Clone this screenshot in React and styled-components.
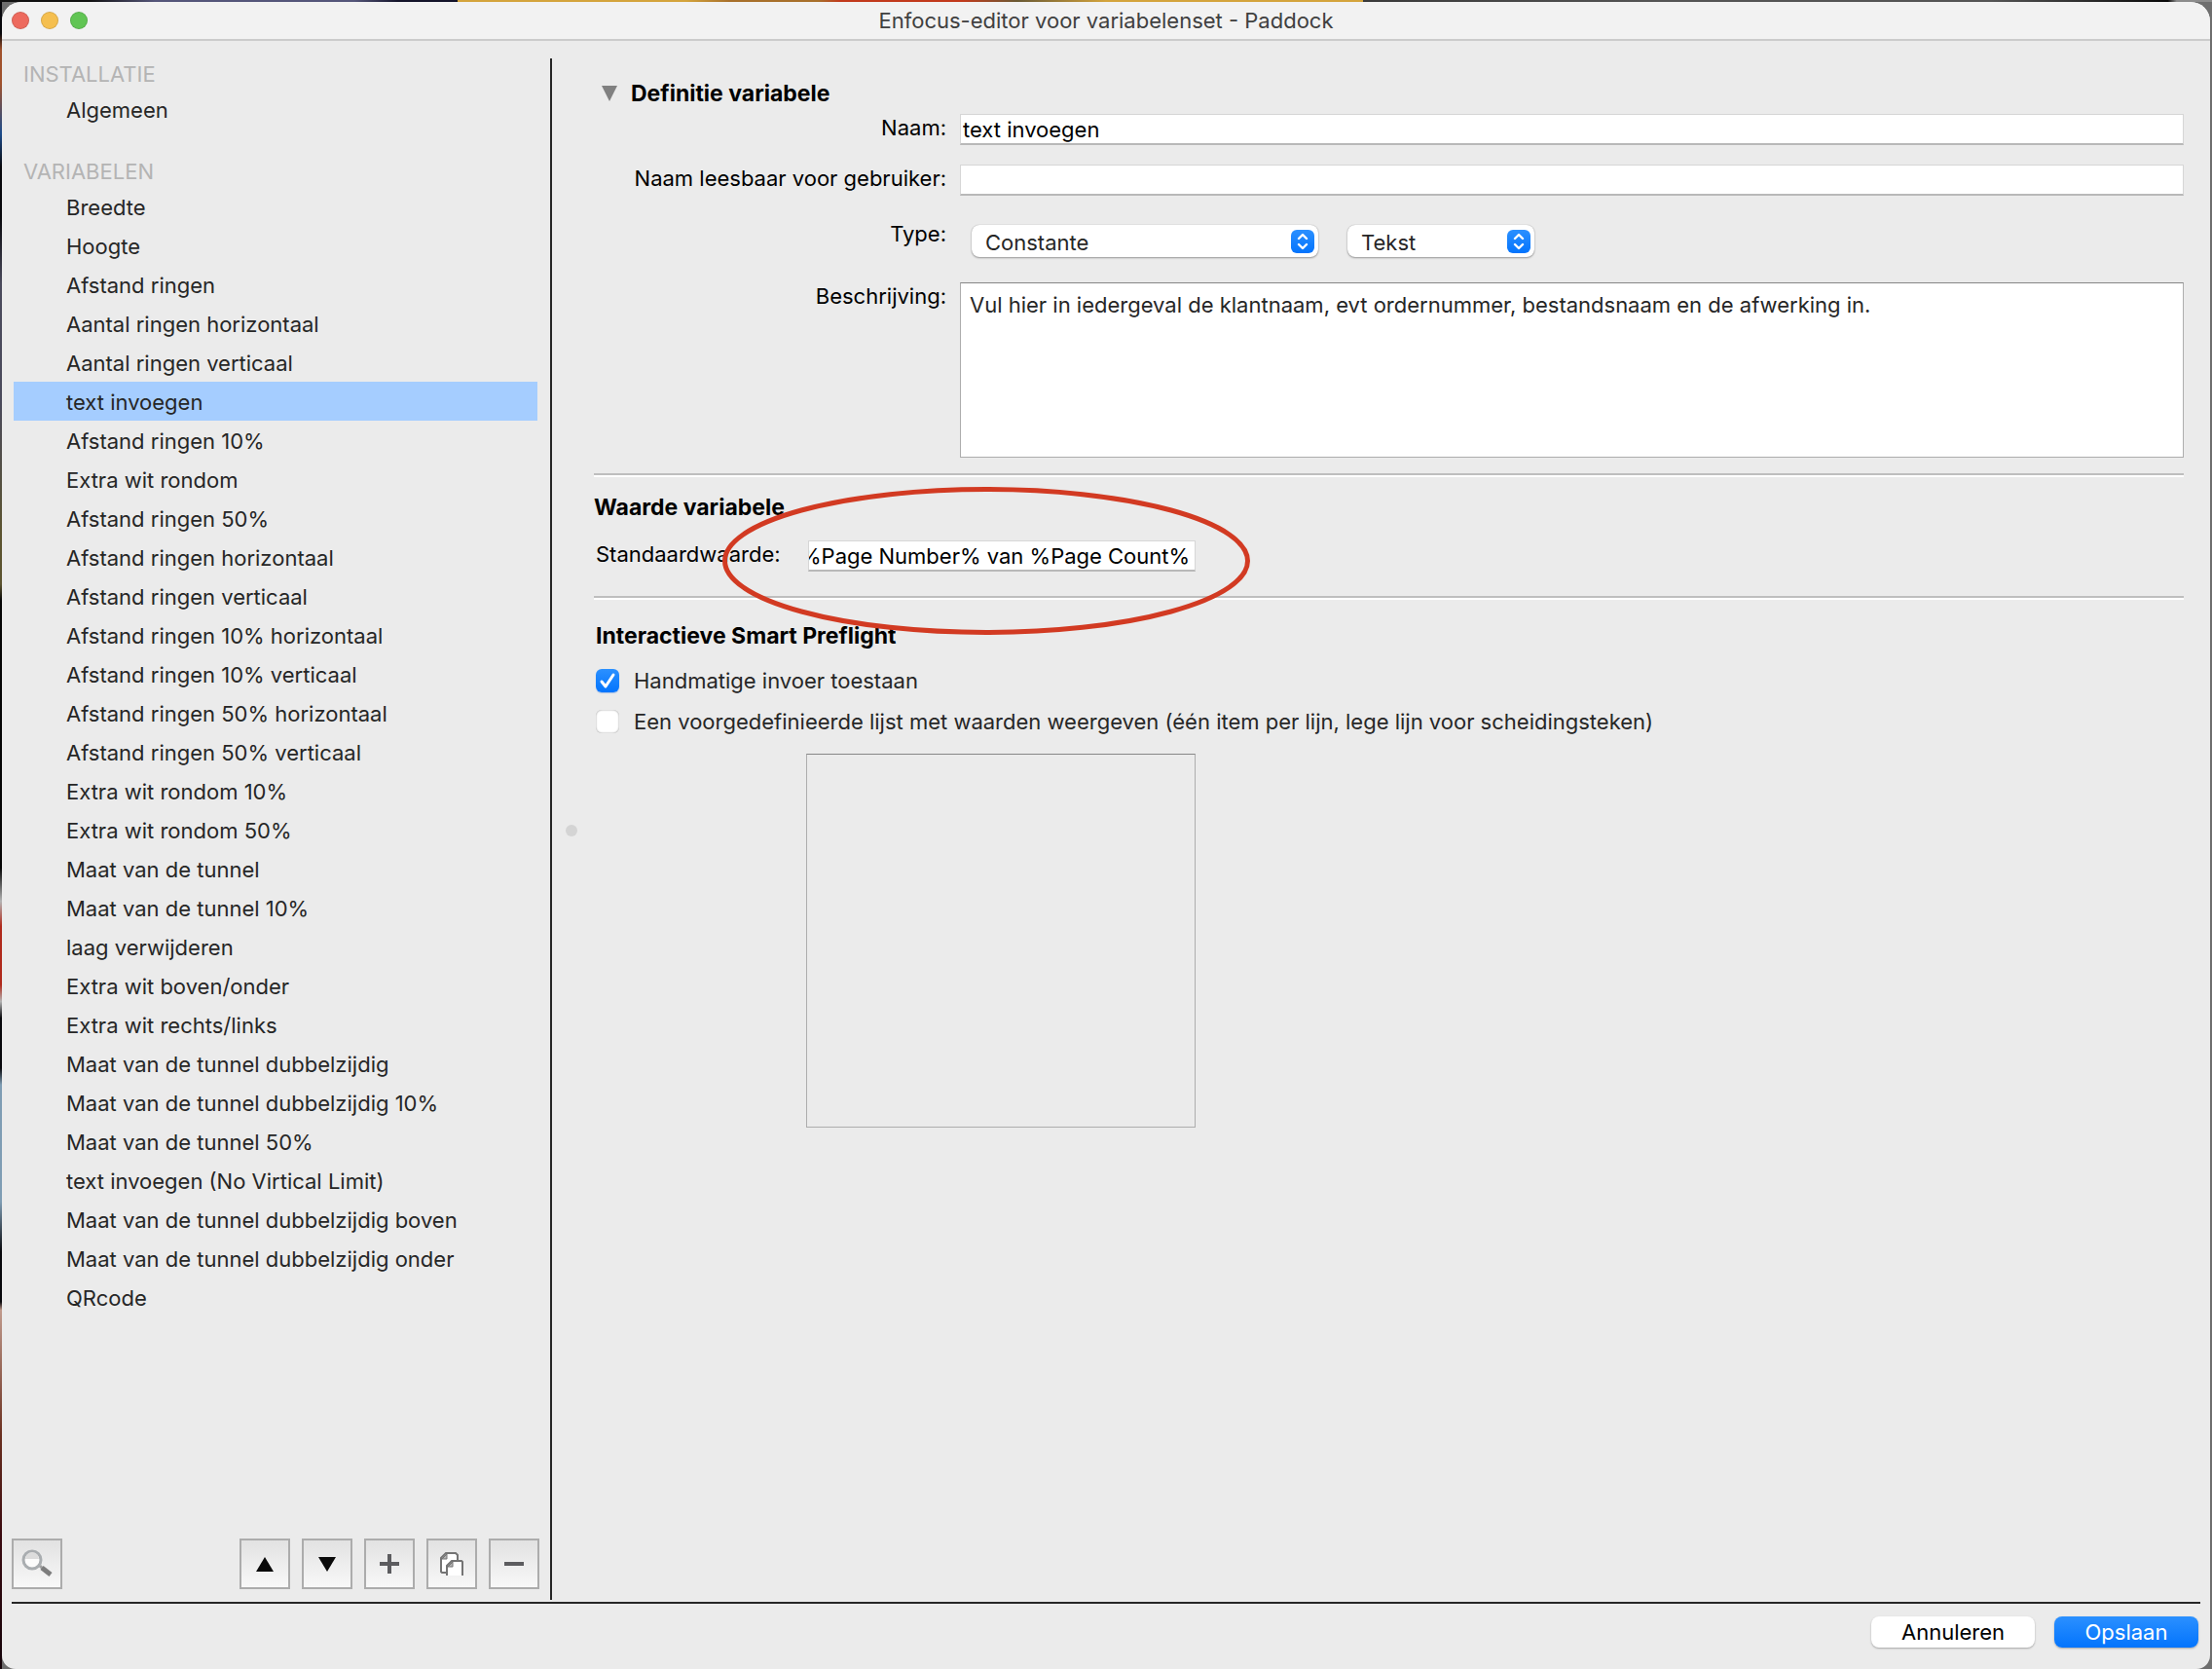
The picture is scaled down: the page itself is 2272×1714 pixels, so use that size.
import React, { useEffect, useRef, useState } from 'react';
import styled, { createGlobalStyle } from 'styled-components';

const GlobalStyle = createGlobalStyle`
  *, *::before, *::after {
    box-sizing: border-box;
  }
  body {
    margin: 0;
    background: #0b0b0f;
  }
  body, button, input, select, textarea {
    font-family: Inter, "Liberation Sans", sans-serif;
    font-size: 22px;
    line-height: 28px;
    color: #262626;
  }
`;

const Desktop = styled.div`
  display: flex;
  min-height: 100vh;
  padding: 2px 2px 0;
  background:
    linear-gradient(90deg, #111 0 4%, #55567a 7% 16%, #14142a 18% 20.7%, #d4a43c 20.7% 31%, #a8702c 33% 37%, #c23a1c 38% 43.5%, #6a5a34 46%, #d4a43c 50% 61.6%, #3a3a3a 61.6%, #555 75% 90%, #0a0a0a 98%, #8c8c8c 98.4%) top / 100% 2px no-repeat,
    linear-gradient(#08080c 0 2%, #a0522d 3% 5%, #1c4c8c 8%, #08080c 10% 13%, #4a4a5c 17% 24%, #5c5430 32% 35%, #050505 36% 52%, #b4b4b4 54%, #b02a1c 55.5% 59%, #b4b4b4 60%, #08080c 61% 64%, #7f9db4 65% 72%, #08080c 75% 78%, #c09a8c 78.5%, #6a3020 86%, #3a0a10 92%, #14040a) left / 2px 100% no-repeat,
    #6e6e6e;
`;
const Window = styled.div`
  display: flex;
  flex: 1;
  flex-direction: column;
  border-radius: 20px 20px 14px 14px;
  background: #ebebeb;
  overflow: hidden;
`;
const TitleBar = styled.header`
  display: grid;
  grid-template-columns: 1fr auto 1fr;
  align-items: center;
  height: 40px;
  padding: 0 10px;
  background: #f2f2f2;
  border-bottom: 2px solid #cbcbcb;
`;
const Lights = styled.div`
  display: flex;
  gap: 12px;
`;
const Light = styled.button`
  width: 18px;
  height: 18px;
  padding: 0;
  border: 1px solid rgba(0, 0, 0, 0.12);
  border-radius: 50%;
  background: ${({ $color }) => $color};
`;
const WindowTitle = styled.h1`
  margin: 0;
  font-size: 22px;
  font-weight: 400;
  line-height: 28px;
  color: #404040;
`;

const Body = styled.div`
  display: flex;
  flex: 1;
  margin: 0 10px;
  padding-top: 18px;
  border-bottom: 2px solid #262626;
`;
const Sidebar = styled.aside`
  display: flex;
  flex-direction: column;
  flex: 0 0 555px;
  margin-bottom: 2px;
  border-right: 2px solid #262626;
`;
const Group = styled.nav`
  margin-bottom: 28px;
  padding-right: 13px;
  padding-left: 2px;
`;
const GroupTitle = styled.h2`
  margin: 0;
  padding-left: 10px;
  font-size: 22px;
  font-weight: 400;
  line-height: 32px;
  color: #b4b4b4;
`;
const List = styled.ul`
  margin: 0;
  padding: 0;
  list-style: none;
`;
const Item = styled.button`
  display: block;
  width: 100%;
  height: 40px;
  padding: 2px 0 0 54px;
  border: 0;
  background: ${({ $active }) => ($active ? '#a5cdff' : 'transparent')};
  text-align: left;
`;
const Tools = styled.div`
  display: flex;
  gap: 12px;
  margin-top: auto;
  padding: 0 11px 11px 0;
`;
const ToolButton = styled.button`
  display: flex;
  align-items: center;
  justify-content: center;
  width: 52px;
  height: 52px;
  padding: 0;
  border: 2px solid #acacac;
  background: linear-gradient(#e2e2e2, #f8f8f8);

  &:first-child {
    margin-right: auto;
  }
`;

const Main = styled.main`
  position: relative;
  flex: 1;
  padding: 22px 17px 0 43px;
`;
const SplitterHandle = styled.span`
  position: absolute;
  top: 50%;
  left: 14px;
  width: 12px;
  height: 12px;
  margin-top: -6px;
  border-radius: 50%;
  background: #d4d4d4;
`;
const Disclosure = styled.button`
  display: flex;
  align-items: center;
  gap: 14px;
  margin-left: 8px;
  padding: 0;
  border: 0;
  background: none;
`;
const SectionTitle = styled.h2`
  margin: 0;
  font-size: 23px;
  font-weight: 700;
  line-height: 28px;
  color: #000;
`;
const Definition = styled.div`
  display: grid;
  grid-template-columns: 362px 1fr;
  column-gap: 14px;
  padding-top: 7px;
`;
const Label = styled.label`
  padding-top: ${({ $top = 0 }) => $top}px;
  text-align: right;
  color: #000;
`;
const TextInput = styled.input`
  width: 100%;
  height: 32px;
  padding: ${({ $padding = '0 2px' }) => $padding};
  border: 1px solid #d6d6d6;
  border-bottom: 2px solid #b8b8b8;
  border-radius: 0;
  background: #fff;
  color: #000;
  outline: none;
`;
const FieldCell = styled.div`
  min-height: 52px;
`;
const Selects = styled.div`
  display: flex;
  gap: 30px;
  padding: 10px 0 26px 12px;
`;
const SelectBox = styled.div`
  position: relative;
  width: ${({ $width }) => $width}px;
  height: 33px;
`;
const Select = styled.select`
  appearance: none;
  width: 100%;
  height: 100%;
  padding: 2px 44px 0 14px;
  border: 0;
  border-radius: 8px;
  background: #fff;
  box-shadow: 0 1px 2px rgba(0, 0, 0, 0.35), 0 0 1px rgba(0, 0, 0, 0.3);
`;
const Stepper = styled.span`
  position: absolute;
  top: 5px;
  right: 4px;
  display: flex;
  width: 24px;
  height: 24px;
  border-radius: 6px;
  background: linear-gradient(#2b90ff, #0374fd);
  pointer-events: none;
`;
const TextArea = styled.textarea`
  display: block;
  width: 100%;
  height: 180px;
  padding: 8px 9px;
  border: 1px solid #adadad;
  border-top-color: #868686;
  border-radius: 0;
  background: #fff;
  resize: none;
  outline: none;
`;
const ValueList = styled(TextArea)`
  width: 400px;
  height: 384px;
  margin: 12px 0 0 216px;
  background: transparent;
`;
const Section = styled.section`
  margin-top: ${({ $gap }) => $gap}px;
  padding-top: ${({ $top }) => $top}px;
  border-top: 2px solid #bebebe;
  box-shadow: inset 0 2px 0 #fff;
`;
const ValueRow = styled.div`
  display: grid;
  grid-template-columns: 218px 398px;
  align-items: start;
  justify-items: start;
  padding: 20px 0 0 2px;
`;
const ValueField = styled.div`
  position: relative;
  width: 100%;
  height: 32px;
`;
const Highlight = styled.svg`
  position: absolute;
  top: -56px;
  left: -89px;
  pointer-events: none;
`;
const Options = styled.div`
  padding-left: 2px;
`;
const CheckList = styled.div`
  padding-top: 11px;
`;
const CheckRow = styled.div`
  display: flex;
  align-items: center;
  gap: 15px;
  height: 42px;
`;
const Checkbox = styled.input`
  appearance: none;
  width: 24px;
  height: 24px;
  margin: 0;
  border-radius: 6px;
  background: #fff;
  box-shadow: inset 0 0 2px rgba(0, 0, 0, 0.45);

  &:checked {
    background: linear-gradient(#2b90ff, #0374fd);
    box-shadow: 0 1px 1px rgba(0, 90, 220, 0.3);
  }
`;
const CheckCell = styled.span`
  display: grid;

  & > * {
    grid-area: 1 / 1;
  }
  & > svg {
    z-index: 1;
    pointer-events: none;
  }
`;

const Footer = styled.footer`
  display: flex;
  justify-content: flex-end;
  gap: 20px;
  padding: 13px 12px 22px;
`;
const DialogButton = styled.button`
  width: ${({ $width }) => $width}px;
  height: 32px;
  padding: 0;
  border: 0;
  border-radius: 8px;
  background: ${({ $primary }) => ($primary ? 'linear-gradient(#2b90ff, #0374fd)' : '#fff')};
  box-shadow: 0 1px 2px rgba(0, 0, 0, 0.3);
  color: ${({ $primary }) => ($primary ? '#fff' : '#000')};
`;

const variables = [
  'Breedte',
  'Hoogte',
  'Afstand ringen',
  'Aantal ringen horizontaal',
  'Aantal ringen verticaal',
  'text invoegen',
  'Afstand ringen 10%',
  'Extra wit rondom',
  'Afstand ringen 50%',
  'Afstand ringen horizontaal',
  'Afstand ringen verticaal',
  'Afstand ringen 10% horizontaal',
  'Afstand ringen 10% verticaal',
  'Afstand ringen 50% horizontaal',
  'Afstand ringen 50% verticaal',
  'Extra wit rondom 10%',
  'Extra wit rondom 50%',
  'Maat van de tunnel',
  'Maat van de tunnel 10%',
  'laag verwijderen',
  'Extra wit boven/onder',
  'Extra wit rechts/links',
  'Maat van de tunnel dubbelzijdig',
  'Maat van de tunnel dubbelzijdig 10%',
  'Maat van de tunnel 50%',
  'text invoegen (No Virtical Limit)',
  'Maat van de tunnel dubbelzijdig boven',
  'Maat van de tunnel dubbelzijdig onder',
  'QRcode',
];

const SearchIcon = () => (
  <svg width="32" height="32" viewBox="0 0 32 32" fill="none">
    <path d="M19 18l4 4" stroke="#a0a0a0" strokeWidth="3" />
    <path d="M21 20l9 7" stroke="#7d7d7d" strokeWidth="5" />
    <circle cx="11" cy="12" r="9" fill="#fbfbfb" stroke="#a9adb0" strokeWidth="3" />
    <path d="M4 11a7 7 0 0 1 14 0z" fill="#dcdcdc" />
  </svg>
);
const UpIcon = () => (
  <svg width="18" height="16" viewBox="0 0 18 16">
    <path d="M9 1l9 15H0z" fill="#0a0a0a" />
  </svg>
);
const DownIcon = () => (
  <svg width="18" height="16" viewBox="0 0 18 16">
    <path d="M9 16l9-15H0z" fill="#0a0a0a" />
  </svg>
);
const PlusIcon = () => (
  <svg width="20" height="20" viewBox="0 0 20 20">
    <path d="M10 0v20M0 10h20" stroke="#5c5c5f" strokeWidth="4" />
  </svg>
);
const MinusIcon = () => (
  <svg width="20" height="20" viewBox="0 0 20 20">
    <path d="M0 10h20" stroke="#5c5c5f" strokeWidth="4" />
  </svg>
);
const CopyIcon = () => (
  <svg width="24" height="24" viewBox="0 0 24 24" fill="#fff" stroke="#747474" strokeWidth="2">
    <path d="M7 21H2l-1-1V6l5-5h10l2 2v7" />
    <path d="M2 7l5-5v5z" fill="#b4b4b4" strokeWidth="1" />
    <path d="M7 24V14l5-5h10l1 1v14" />
    <path d="M8 15l5-5v5z" fill="#b4b4b4" strokeWidth="1" />
  </svg>
);
const ChevronsIcon = () => (
  <svg width="24" height="24" viewBox="0 0 24 24" fill="none" stroke="#fff" strokeWidth="2.4" strokeLinecap="round" strokeLinejoin="round">
    <path d="M8 9l4-4 4 4M8 15l4 4 4-4" />
  </svg>
);

function DropDown({ id, label, width, options }) {
  return (
    <SelectBox $width={width}>
      <Select id={id} aria-label={label} defaultValue={options[0]}>
        {options.map((option) => (
          <option key={option}>{option}</option>
        ))}
      </Select>
      <Stepper>
        <ChevronsIcon />
      </Stepper>
    </SelectBox>
  );
}

function CheckOption({ id, label, defaultChecked = false }) {
  const [checked, setChecked] = useState(defaultChecked);

  return (
    <CheckRow>
      <CheckCell>
        <Checkbox type="checkbox" id={id} checked={checked} onChange={(e) => setChecked(e.target.checked)} />
        {checked && (
          <svg width="24" height="24" viewBox="0 0 24 24" fill="none" stroke="#fff" strokeWidth="3" strokeLinecap="round" strokeLinejoin="round">
            <path d="M6 13l4 5 8-12" />
          </svg>
        )}
      </CheckCell>
      <label htmlFor={id}>{label}</label>
    </CheckRow>
  );
}

function DefaultValue() {
  const inputRef = useRef(null);

  // keep the end of a long value in view
  useEffect(() => {
    inputRef.current.scrollLeft = inputRef.current.scrollWidth;
  }, []);

  return (
    <ValueRow>
      <Label htmlFor="default">Standaardwaarde:</Label>
      <ValueField>
        <TextInput id="default" ref={inputRef} $padding="0 5px 0 0" defaultValue="%Page Number% van %Page Count%" />
        <Highlight width="544" height="154" viewBox="0 0 544 154">
          <ellipse cx="272" cy="77" rx="268.5" ry="73.5" fill="none" stroke="#d23a22" strokeWidth="5" />
        </Highlight>
      </ValueField>
    </ValueRow>
  );
}

function VariableList() {
  const [active, setActive] = useState('text invoegen');

  return (
    <Sidebar>
      <Group>
        <GroupTitle>INSTALLATIE</GroupTitle>
        <List>
          <li>
            <Item $active={active === 'Algemeen'} onClick={() => setActive('Algemeen')}>Algemeen</Item>
          </li>
        </List>
      </Group>
      <Group>
        <GroupTitle>VARIABELEN</GroupTitle>
        <List>
          {variables.map((name) => (
            <li key={name}>
              <Item $active={active === name} onClick={() => setActive(name)}>{name}</Item>
            </li>
          ))}
        </List>
      </Group>
      <Tools>
        <ToolButton aria-label="Zoeken"><SearchIcon /></ToolButton>
        <ToolButton aria-label="Omhoog"><UpIcon /></ToolButton>
        <ToolButton aria-label="Omlaag"><DownIcon /></ToolButton>
        <ToolButton aria-label="Toevoegen"><PlusIcon /></ToolButton>
        <ToolButton aria-label="Dupliceren"><CopyIcon /></ToolButton>
        <ToolButton aria-label="Verwijderen"><MinusIcon /></ToolButton>
      </Tools>
    </Sidebar>
  );
}

function VariableForm() {
  return (
    <Main>
      <SplitterHandle />
      <Disclosure aria-expanded="true">
        <svg width="16" height="16" viewBox="0 0 16 16">
          <path d="M0 0h16L8 16z" fill="#808080" />
        </svg>
        <SectionTitle as="span">Definitie variabele</SectionTitle>
      </Disclosure>
      <Definition>
        <Label htmlFor="name">Naam:</Label>
        <FieldCell>
          <TextInput id="name" defaultValue="text invoegen" />
        </FieldCell>
        <Label htmlFor="readable">Naam leesbaar voor gebruiker:</Label>
        <FieldCell>
          <TextInput id="readable" />
        </FieldCell>
        <Label htmlFor="kind" $top={5}>Type:</Label>
        <Selects>
          <DropDown id="kind" label="Type" width={356} options={['Constante']} />
          <DropDown id="format" label="Soort" width={192} options={['Tekst']} />
        </Selects>
        <Label htmlFor="description">Beschrijving:</Label>
        <TextArea
          id="description"
          defaultValue="Vul hier in iedergeval de klantnaam, evt ordernummer, bestandsnaam en de afwerking in."
        />
      </Definition>

      <Section $gap={16} $top={19}>
        <SectionTitle>Waarde variabele</SectionTitle>
        <DefaultValue />
      </Section>

      <Section $gap={25} $top={25}>
        <Options>
          <SectionTitle>Interactieve Smart Preflight</SectionTitle>
          <CheckList>
            <CheckOption id="manual" label="Handmatige invoer toestaan" defaultChecked />
            <CheckOption
              id="predefined"
              label="Een voorgedefinieerde lijst met waarden weergeven (één item per lijn, lege lijn voor scheidingsteken)"
            />
          </CheckList>
          <ValueList aria-label="Waarden" />
        </Options>
      </Section>
    </Main>
  );
}

function App() {
  return (
    <Desktop>
      <GlobalStyle />
      <Window>
        <TitleBar>
          <Lights>
            <Light aria-label="Sluiten" $color="#ed6a5e" />
            <Light aria-label="Minimaliseren" $color="#f5bf4f" />
            <Light aria-label="Vergroten" $color="#61c554" />
          </Lights>
          <WindowTitle>Enfocus-editor voor variabelenset - Paddock</WindowTitle>
        </TitleBar>
        <Body>
          <VariableList />
          <VariableForm />
        </Body>
        <Footer>
          <DialogButton $width={168}>Annuleren</DialogButton>
          <DialogButton $width={148} $primary>Opslaan</DialogButton>
        </Footer>
      </Window>
    </Desktop>
  );
}

export default App;
